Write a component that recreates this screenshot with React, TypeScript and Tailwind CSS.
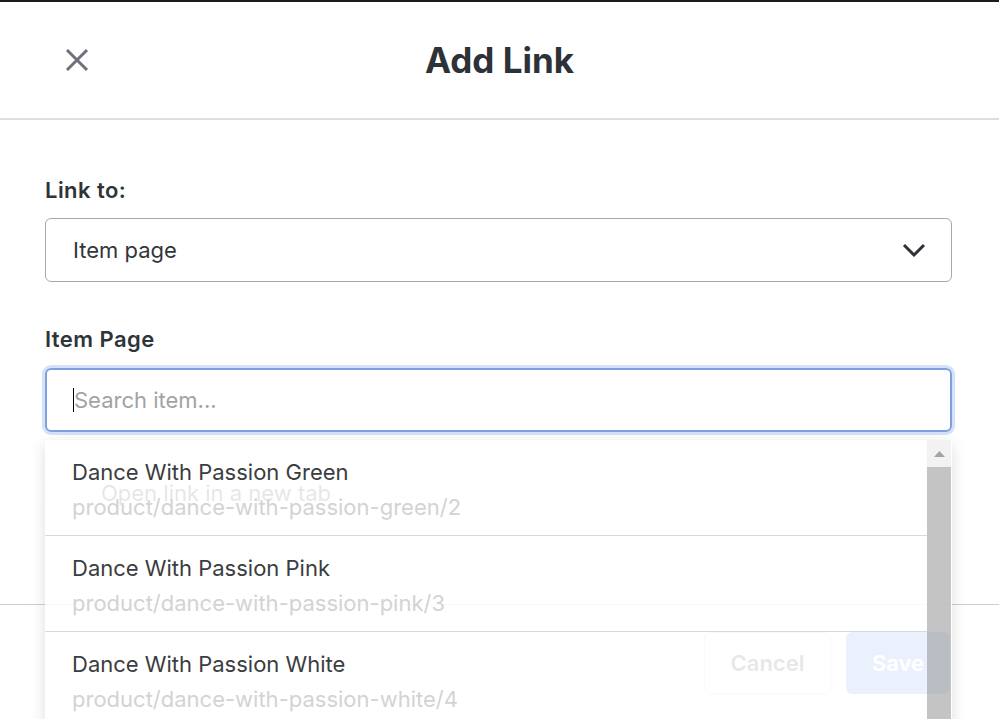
import { useState } from 'react'

type Item = { name: string; path: string }

const ITEMS: Item[] = [
  { name: 'Dance With Passion Green', path: 'product/dance-with-passion-green/2' },
  { name: 'Dance With Passion Pink', path: 'product/dance-with-passion-pink/3' },
  { name: 'Dance With Passion White', path: 'product/dance-with-passion-white/4' },
]

function ItemDropdown({ items }: { items: Item[] }) {
  return (
    <div className="absolute left-0 right-0 top-[72px] z-10 flex h-[300px] bg-white/[0.88] shadow-[0_4px_14px_rgba(0,0,0,0.13)]">
      <ul className="flex-1">
        {items.map((item) => (
          <li key={item.path} className="h-[96px] border-b border-[#d9d9d9] px-[27px] pt-[18px]">
            <div className="text-[22px] leading-[28px] text-[#3b3d40]">{item.name}</div>
            <div className="mt-[7px] text-[22px] leading-[28px] text-[#d3d3d3]">{item.path}</div>
          </li>
        ))}
      </ul>
      {/* fake scrollbar */}
      <div className="mr-px flex w-[24px] flex-col">
        <div className="flex h-[27px] items-center justify-center bg-[#f1f1f1]/90">
          <svg width="11" height="6" viewBox="0 0 11 6">
            <polygon points="5.5,0 11,6 0,6" fill="#a3a3a3" />
          </svg>
        </div>
        <div className="flex-1 bg-[#8a8a8a]/50" />
      </div>
    </div>
  )
}

export default function App() {
  const [newTab, setNewTab] = useState(false)

  return (
    <div className="flex h-[719px] w-[999px] flex-col overflow-hidden border-t-2 border-[#1b1b1b] bg-white font-['Inter','Liberation_Sans',sans-serif] text-[#3a3d40]">
      <header className="grid h-[118px] shrink-0 grid-cols-[1fr_auto_1fr] items-center border-b-2 border-[#dedede] px-[62px]">
        <button className="flex h-[30px] w-[30px] items-center justify-center justify-self-start text-[#6e717a]" aria-label="Close">
          <svg width="24" height="24" viewBox="0 0 24 24" fill="none" stroke="currentColor" strokeWidth="3">
            <path d="M2 2L22 22M22 2L2 22" />
          </svg>
        </button>
        <h1 className="text-[35px] font-bold text-[#2d3238]">Add Link</h1>
        <div />
      </header>

      <main className="flex-1 pl-[45px] pr-[47px] pt-[56px]">
        <label className="block text-[22px] font-semibold leading-[28px] tracking-[0.02em] text-[#2f3437]">Link to:</label>
        <div className="mt-[14px] flex h-[64px] items-center justify-between rounded-[6px] border border-[#a9a9a9] pl-[27px] pr-[25px]">
          <span className="text-[22px] text-[#333639]">Item page</span>
          <svg width="24" height="15" viewBox="0 0 24 15" fill="none" stroke="#2d3238" strokeWidth="3">
            <path d="M2 2L12 12L22 2" />
          </svg>
        </div>

        <label className="mt-[43px] block text-[22px] font-semibold leading-[28px] tracking-[0.02em] text-[#2f3437]">Item Page</label>
        <div className="relative mt-[15px]">
          <div className="flex h-[64px] items-center rounded-[6px] border-2 border-[#7ea1dc] px-[26px] ring-[3px] ring-[#d3e2fa]">
            <span className="h-[24px] w-px bg-black" />
            <span className="text-[22px] text-[#a3a3a3]">Search item...</span>
          </div>
          <ItemDropdown items={ITEMS} />
        </div>

        <div className="mt-[47px] flex h-[28px] items-center gap-[32px]">
          <button
            onClick={() => setNewTab(!newTab)}
            className="h-[24px] w-[24px] rounded-[4px] border border-[#ececec]"
            aria-label="Open link in a new tab"
          />
          <span className="text-[22px] text-[#333639]">Open link in a new tab</span>
        </div>
      </main>

      <footer className="flex h-[115px] shrink-0 items-start justify-end gap-[15px] border-t border-[#cfcfcf] pr-[49px] pt-[27px]">
        <button className="h-[62px] w-[127px] rounded-[6px] border border-[#cfcfcf] text-[22px] font-semibold text-[#3a3d40]">
          Cancel
        </button>
        <button className="h-[62px] w-[104px] rounded-[6px] bg-[#5a8fe6] text-[22px] font-semibold text-white">
          Save
        </button>
      </footer>
    </div>
  )
}
